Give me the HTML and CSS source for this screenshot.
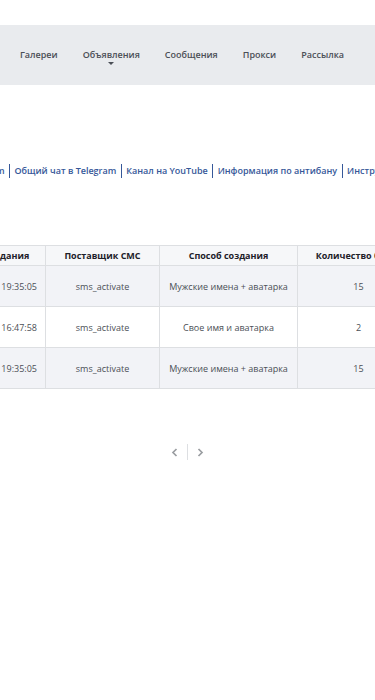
FILE: index.html
```html
<!DOCTYPE html>
<html lang="ru">
<head>
<meta charset="utf-8">
<title>Аккаунты</title>
<link rel="stylesheet" href="styles.css">
</head>
<body>
<div class="page">
  <nav class="nav">
    <a class="nav-item">Галереи</a>
    <a class="nav-item has-menu">Объявления<span class="caret"></span></a>
    <a class="nav-item">Сообщения</a>
    <a class="nav-item">Прокси</a>
    <a class="nav-item">Рассылка</a>
  </nav>

  <div class="links">
    <a class="link first">Чат в Telegram</a><a class="link">Общий чат в Telegram</a><a class="link">Канал на YouTube</a><a class="link">Информация по антибану</a><a class="link">Инструкция</a>
  </div>

  <table class="grid">
    <colgroup>
      <col class="c1"><col class="c2"><col class="c3"><col class="c4">
    </colgroup>
    <thead>
      <tr><th>Дата создания</th><th>Поставщик СМС</th><th>Способ создания</th><th>Количество ботов</th></tr>
    </thead>
    <tbody>
      <tr class="odd"><td>2020-09-22 19:35:05</td><td>sms_activate</td><td>Мужские имена + аватарка</td><td>15</td></tr>
      <tr><td>2020-09-21 16:47:58</td><td>sms_activate</td><td>Свое имя и аватарка</td><td>2</td></tr>
      <tr class="odd"><td>2020-09-20 19:35:05</td><td>sms_activate</td><td>Мужские имена + аватарка</td><td>15</td></tr>
    </tbody>
  </table>

  <div class="pager">
    <a class="pg prev"><svg width="7" height="9" viewBox="0 0 7 9"><path d="M5.5 1 L2 4.5 L5.5 8" fill="none" stroke="#9a9da1" stroke-width="1.7"/></svg></a>
    <span class="pg-sep"></span>
    <a class="pg next"><svg width="7" height="9" viewBox="0 0 7 9"><path d="M1.5 1 L5 4.5 L1.5 8" fill="none" stroke="#9a9da1" stroke-width="1.7"/></svg></a>
  </div>
</div>
</body>
</html>
```

FILE: styles.css
```css
html, body {
  margin: 0;
  padding: 0;
  background: #ffffff;
}
body {
  font-family: "Open Sans", "Liberation Sans", sans-serif;
  overflow: hidden;
  width: 375px;
  height: 700px;
}
.page {
  width: 375px;
  overflow: hidden;
}
.nav {
  margin-top: 25px;
  height: 60px;
  background: #e9ebee;
  display: flex;
  align-items: center;
  gap: 25px;
  padding-left: 20px;
  white-space: nowrap;
}
.nav-item {
  position: relative;
  font-size: 9px;
  font-weight: 600;
  color: #4b4f56;
  line-height: 14px;
  cursor: pointer;
}
.caret {
  position: absolute;
  left: 50%;
  top: 14px;
  margin-left: -3px;
  width: 0;
  height: 0;
  border-left: 3px solid transparent;
  border-right: 3px solid transparent;
  border-top: 3.5px solid #4b4f56;
}
.links {
  margin-top: 79px;
  margin-left: -67px;
  display: flex;
  white-space: nowrap;
  line-height: 14px;
}
.link {
  font-size: 9px;
  font-weight: 600;
  color: #365899;
  padding: 0 4.5px;
  border-left: 1px solid #365899;
}
.link.first {
  border-left: none;
}
.grid {
  margin-top: 67px;
  margin-left: -57px;
  border-collapse: collapse;
  table-layout: fixed;
  width: 476px;
  font-size: 9px;
}
.c1 { width: 102px; }
.c2 { width: 114px; }
.c3 { width: 138px; }
.c4 { width: 122px; }
.grid th, .grid td {
  border: 1px solid #dddfe2;
  text-align: center;
  white-space: nowrap;
  padding: 0 4px;
  overflow: hidden;
}
.grid th {
  height: 19px;
  font-weight: 700;
  color: #1d2129;
  background: #f6f7f9;
}
.grid td {
  height: 40px;
  color: #4b4f56;
  background: #ffffff;
}
.grid tr.odd td {
  background: #f2f3f7;
}
.pager {
  margin-top: 55px;
  display: flex;
  justify-content: center;
  align-items: center;
  height: 16px;
  gap: 9px;
}
.pg {
  display: flex;
  align-items: center;
}
.pg-sep {
  width: 1px;
  height: 16px;
  background: #dddfe2;
}
```
